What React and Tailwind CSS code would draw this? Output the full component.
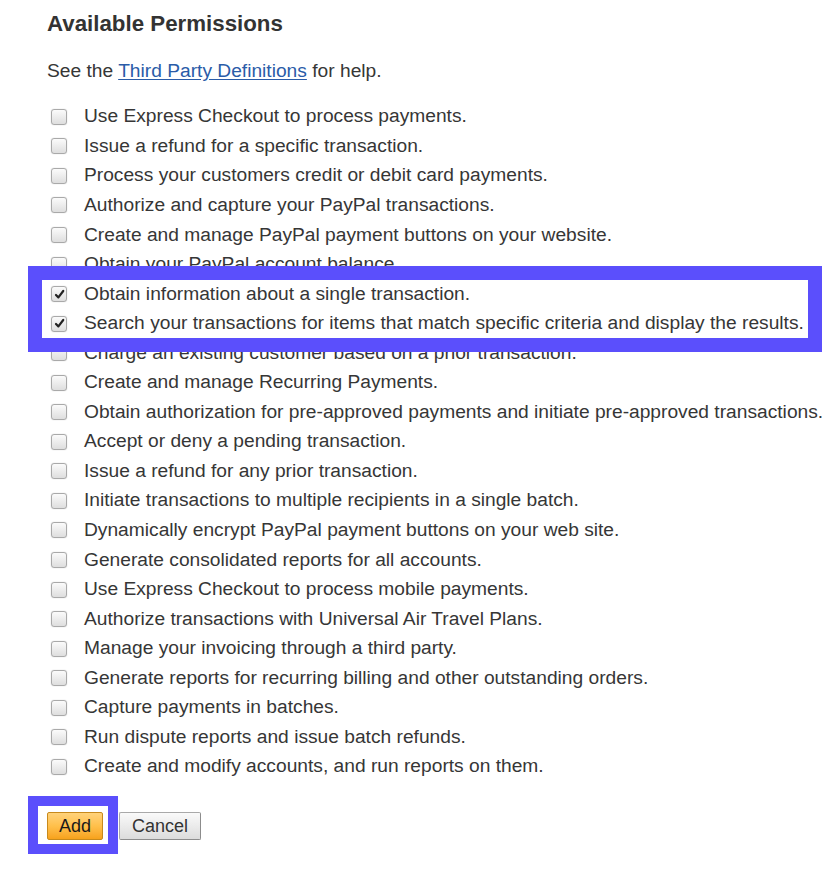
const permissions = [
  { label: "Use Express Checkout to process payments." },
  { label: "Issue a refund for a specific transaction." },
  { label: "Process your customers credit or debit card payments." },
  { label: "Authorize and capture your PayPal transactions." },
  { label: "Create and manage PayPal payment buttons on your website." },
  { label: "Obtain your PayPal account balance." },
  { label: "Obtain information about a single transaction.", checked: true },
  { label: "Search your transactions for items that match specific criteria and display the results.", checked: true },
  { label: "Charge an existing customer based on a prior transaction." },
  { label: "Create and manage Recurring Payments." },
  { label: "Obtain authorization for pre-approved payments and initiate pre-approved transactions." },
  { label: "Accept or deny a pending transaction." },
  { label: "Issue a refund for any prior transaction." },
  { label: "Initiate transactions to multiple recipients in a single batch." },
  { label: "Dynamically encrypt PayPal payment buttons on your web site." },
  { label: "Generate consolidated reports for all accounts." },
  { label: "Use Express Checkout to process mobile payments." },
  { label: "Authorize transactions with Universal Air Travel Plans." },
  { label: "Manage your invoicing through a third party." },
  { label: "Generate reports for recurring billing and other outstanding orders." },
  { label: "Capture payments in batches." },
  { label: "Run dispute reports and issue batch refunds." },
  { label: "Create and modify accounts, and run reports on them." },
];

function Checkbox({ checked }) {
  return (
    <div className="ml-[4px] w-[16px] h-[16px] shrink-0 rounded-[3px] border border-[#a9a9a9] bg-gradient-to-b from-[#fbfbfb] to-[#dedede] shadow-[0_0_1px_rgba(0,0,0,0.3)] flex items-center justify-center">
      {checked && (
        <svg width="11" height="11" viewBox="0 0 10 10">
          <path d="M1.8 5.4 L4 7.6 L8.4 1.8" fill="none" stroke="#222" strokeWidth="2" strokeLinecap="round" strokeLinejoin="round" />
        </svg>
      )}
    </div>
  );
}

export default function App() {
  return (
    <div className="relative w-[840px] h-[878px] bg-white text-[#363636] font-['Liberation_Sans',Arial,sans-serif]">
      <div className="pl-[47px] pt-[11px]">
        <h2 className="text-[22.3px] leading-[26px] font-bold text-[#333]">
          Available Permissions
        </h2>

        <p className="mt-[19px] text-[19.2px] leading-[30px]">
          See the{" "}
          <a href="#" className="text-[#2a5ca8] underline underline-offset-2">
            Third Party Definitions
          </a>{" "}
          for help.
        </p>

        <ul className="mt-[16px]">
          {permissions.map((p) => (
            <li key={p.label} className="flex items-center h-[29.55px] gap-[17px] text-[19.2px] whitespace-nowrap">
              <Checkbox checked={p.checked} />
              <span>{p.label}</span>
            </li>
          ))}
        </ul>

        <div className="mt-[30px] flex items-center gap-[16px]">
          <button className="h-[28px] px-[11px] text-[18px] leading-none text-[#1a1a1a] border border-[#c88a1c] rounded-[2px] bg-gradient-to-b from-[#ffd27a] via-[#ffc04a] to-[#f7a21a]">
            Add
          </button>
          <button className="h-[28px] px-[12px] text-[18px] leading-none text-[#333] border border-[#a9a9a9] border-r-[#8c8c8c] border-b-[#8c8c8c] rounded-[2px] bg-gradient-to-b from-[#fafafa] to-[#dcdcdc]">
            Cancel
          </button>
        </div>
      </div>

      {/* highlight annotations */}
      <div className="absolute left-[28px] top-[266px] w-[794px] h-[86px] border-[14px] border-[#5b4ffc]" />
      <div className="absolute left-[28px] top-[796px] w-[90px] h-[58px] border-[10px] border-[#5b4ffc]" />
    </div>
  );
}
